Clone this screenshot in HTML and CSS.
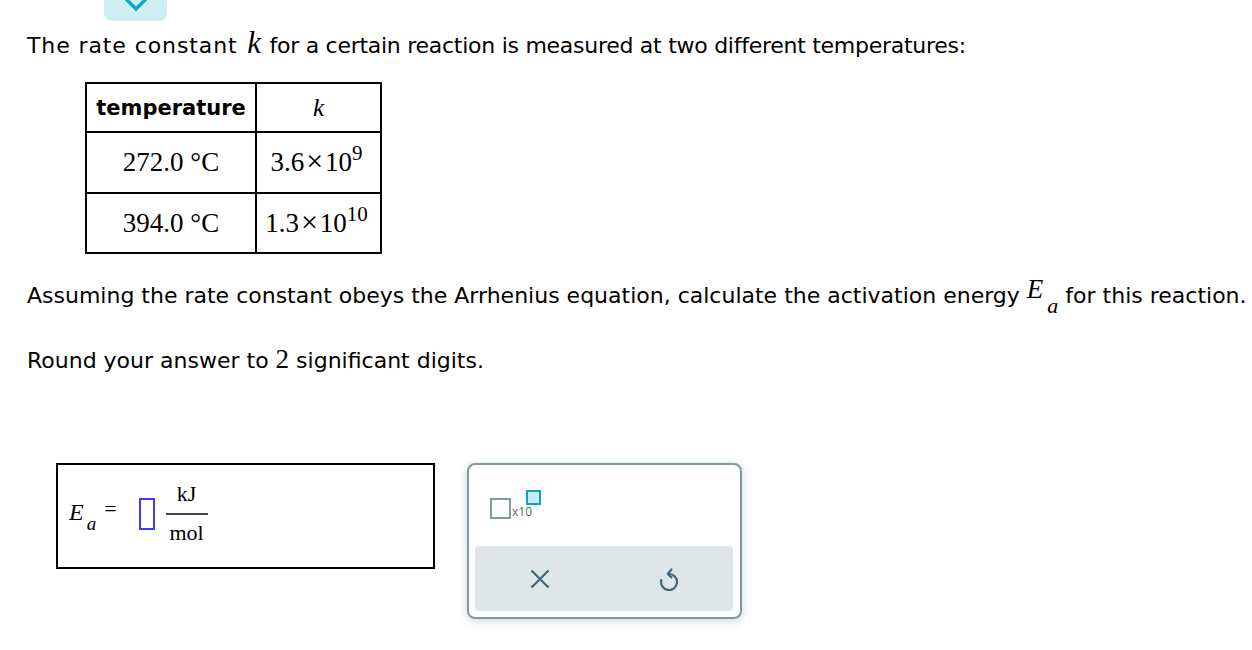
FILE: index.html
```html
<!DOCTYPE html>
<html>
<head>
<meta charset="utf-8">
<link rel="stylesheet" href="styles.css">
</head>
<body>
<div class="page">
  <div class="tab">
    <svg width="30" height="12" viewBox="0 0 30 12"><path d="M5 -1 L15 9 L25 -1" fill="none" stroke="#1aa5c4" stroke-width="3.4"/></svg>
  </div>
  <p class="line first"><span class="pre">The rate constant</span> <i class="k">k</i> for a certain reaction is measured at two different temperatures:</p>
  <table class="data">
    <tr class="head"><th class="c1">temperature</th><th class="c2"><i class="hk">k</i></th></tr>
    <tr class="r r1"><td class="c1">272.0 °C</td><td class="c2">3.6<span class="times">×</span>10<sup>9</sup></td></tr>
    <tr class="r r2"><td class="c1">394.0 °C</td><td class="c2">1.3<span class="times">×</span>10<sup>10</sup></td></tr>
  </table>
  <p class="line second">Assuming the rate constant obeys the Arrhenius equation, calculate the activation energy <span class="m"><i class="cap">E</i><i class="sb">a</i></span> for this reaction.</p>
  <p class="line third">Round your answer to <span class="num">2</span> significant digits.</p>
  <div class="answer-row">
    <div class="answer">
      <span class="ea"><i class="ecap">E</i><i class="esb">a</i></span>
      <span class="eq">=</span>
      <span class="input"></span>
      <span class="frac"><span class="top">kJ</span><span class="bar"></span><span class="bot">mol</span></span>
    </div>
    <div class="tools">
      <div class="sci">
        <span class="box"></span><span class="x10">x10</span><span class="exp"></span>
      </div>
      <div class="actions">
        <svg class="ic" width="20" height="20" viewBox="0 0 20 20"><path d="M1.5 1.5 L18.5 18.5 M18.5 1.5 L1.5 18.5" stroke="#3f6773" stroke-width="2.2" fill="none"/></svg>
        <svg class="ic" width="20" height="24" viewBox="0 0 20 24"><path d="M10 7 A8 8 0 1 1 2.3 13" stroke="#3f6773" stroke-width="2.2" fill="none" stroke-linecap="round"/><path d="M12.5 2.5 L8.8 7 L12.5 10.5" stroke="#3f6773" stroke-width="2.2" fill="none" stroke-linecap="round" stroke-linejoin="round"/></svg>
      </div>
    </div>
  </div>
</div>
</body>
</html>
```
FILE: styles.css
```css
html, body { margin: 0; padding: 0; background: #fff; }
body { font-family: "DejaVu Sans", Verdana, sans-serif; font-size: 22px; color: #000; }
.page { width: 1252px; height: 650px; overflow: hidden; }
.tab {
  margin-left: 104px; width: 63px; height: 21px;
  background: #cdeef3; border-radius: 0 0 8px 8px;
  display: flex; justify-content: center; align-items: flex-start;
}
.tab svg { display: block; }
.line { margin: 0; padding-left: 27px; line-height: 30px; white-space: nowrap; }
.first { margin-top: 10px; letter-spacing: -0.27px; }
.pre { letter-spacing: 0.9px; }
.k { font-family: "Liberation Serif", "Times New Roman", serif; font-size: 31px; line-height: 0; margin: 0 2px 0 3px; }
.m { font-family: "Liberation Serif", "Times New Roman", serif; line-height: 0; }
.cap { font-size: 27px; position: relative; top: -5px; }
.m .sb { font-size: 22px; position: relative; top: 10px; margin-left: 4px; }
.data { border-collapse: collapse; margin: 21px 0 0 85px; }
.data th, .data td { border: 2px solid #000; text-align: center; padding: 0; }
.data .c1 { width: 168px; }
.data .c2 { width: 119px; }
.head th { height: 47px; font-weight: bold; font-size: 21px; }
.head th.c2 { font-weight: normal; }
.hk { font-family: "Liberation Serif", "Times New Roman", serif; font-size: 25px; }
.r td { font-family: "Liberation Serif", "Times New Roman", serif; font-size: 27px; }
.r .c2 { padding-right: 4px; }
.r1 td { height: 59px; }
.r2 td { height: 58px; }
.times { font-size: 30px; margin: 0 2px 0 2px; line-height: 0; }
.r sup { font-size: 21px; vertical-align: 11px; line-height: 0; }
.second { margin-top: 27px; }
.third { margin-top: 35px; }
.num { font-family: "Liberation Serif", "Times New Roman", serif; font-size: 27px; line-height: 0; }
.answer-row { display: flex; align-items: flex-start; margin-top: 87px; }
.answer {
  margin-left: 56px; width: 375px; height: 102px; border: 2px solid #000;
  display: flex; align-items: flex-start; font-family: "Liberation Serif", "Times New Roman", serif;
}
.ea { margin: 35px 0 0 11px; font-size: 22px; line-height: 24px; white-space: nowrap; }
.ecap { font-size: 24px; }
.esb { font-size: 19px; position: relative; top: 10px; margin-left: 3px; }
.eq { margin: 32px 0 0 8px; font-size: 22px; line-height: 24px; }
.input { margin: 33px 0 0 22px; width: 12px; height: 28px; border: 2px solid #3b3bff; }
.frac { display: flex; flex-direction: column; align-items: center; margin: 18px 0 0 11px; font-size: 22px; }
.frac .top { line-height: 22px; height: 22px; }
.frac .bar { width: 42px; height: 2px; background: #444; margin-top: 8px; }
.frac .bot { line-height: 22px; margin-top: 7px; }
.tools {
  margin-left: 32px; width: 271px; height: 152px;
  border: 2px solid #7f9ba2; border-radius: 8px; background: #fff;
  box-shadow: 0 2px 10px rgba(60,90,100,0.25);
  display: flex; flex-direction: column;
}
.sci { position: relative; height: 81px; flex: none; }
.sci .box { position: absolute; left: 21px; top: 33px; width: 17px; height: 17px; border: 2px solid #7f9aa0; }
.sci .x10 { position: absolute; left: 43px; top: 41px; font-family: "Open Sans", sans-serif; font-size: 12px; line-height: 12px; color: #4a6a74; }
.sci .exp { position: absolute; left: 57px; top: 25px; width: 11px; height: 11px; border: 2px solid #14a0be; background: #c8ecf2; }
.actions {
  margin: 0 7px 0 6px; height: 65px; background: #dfe6e8; border-radius: 4px;
  display: flex; justify-content: space-around; align-items: center;
}
.ic { display: block; }
```
